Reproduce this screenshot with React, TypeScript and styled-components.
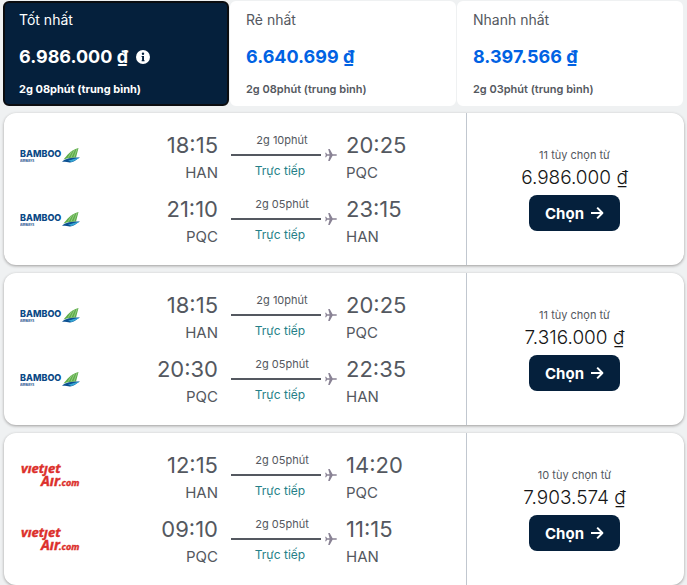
import React from "react";
import styled, { createGlobalStyle } from "styled-components";

const GlobalStyle = createGlobalStyle`
  *, *::before, *::after { box-sizing: border-box; }
  body {
    margin: 0;
    background: #eff1f2;
    color: #545860;
    font-family: Inter, "Liberation Sans", sans-serif;
  }
  button { font-family: inherit; }
`;

const Page = styled.main`
  padding: 1px 3px 0;
`;

const Tabs = styled.div`
  display: grid;
  grid-template-columns: repeat(3, minmax(0, 1fr));
  gap: 1px;
  margin: 0 1px 7px 0;
`;

const Tab = styled.button<{ $active: boolean }>`
  display: flex;
  flex-direction: column;
  align-items: flex-start;
  padding: 7px 14px;
  border: 2px solid ${(p) => (p.$active ? "#0b0d10" : "#fff")};
  border-radius: 6px;
  background: ${(p) => (p.$active ? "#05203c" : "#fff")};
  color: ${(p) => (p.$active ? "#fff" : "#545860")};
  text-align: left;
  cursor: pointer;
`;

const TabLabel = styled.span`
  font-size: 14px;
  line-height: 20px;
`;

const TabPrice = styled.span<{ $active: boolean }>`
  display: flex;
  align-items: center;
  gap: 8px;
  margin: 13px 0 10px;
  color: ${(p) => (p.$active ? "#fff" : "#0062e3")};
  font-size: 18px;
  font-weight: 700;
  line-height: 28px;
`;

const TabNote = styled.span<{ $active: boolean }>`
  font-size: 11px;
  font-weight: ${(p) => (p.$active ? 700 : 600)};
  line-height: 16px;
`;

const Results = styled.div`
  display: grid;
  gap: 8px;
  padding-left: 1px;
`;

const Card = styled.article`
  display: grid;
  grid-template-columns: minmax(0, 1fr) 218px;
  border-radius: 12px;
  background: #fff;
  box-shadow: 0 1px 3px rgba(37, 32, 31, 0.4);
`;

const Legs = styled.div`
  padding: 12px 0 12px 16px;
`;

const Leg = styled.div`
  display: grid;
  grid-template-columns: 60px minmax(0, 1fr) 106px 129px;
  align-items: center;
  height: 64px;
`;

const Logo = styled.div`
  display: flex;
  padding-bottom: 4px;
`;

const Stop = styled.div<{ $end?: boolean }>`
  padding: ${(p) => (p.$end ? "0 13px 0 0" : "0 0 0 9px")};
  text-align: ${(p) => (p.$end ? "right" : "left")};
`;

const Time = styled.div`
  font-size: 22px;
  line-height: 32px;
`;

const Airport = styled.div`
  font-size: 15px;
  line-height: 24px;
`;

const Route = styled.div`
  display: grid;
  padding-bottom: 3px;
  line-height: 16px;
`;

const RouteText = styled.span<{ $direct?: boolean }>`
  padding: ${(p) => (p.$direct ? "1px 8px 0 0" : "0 4px 0 0")};
  color: ${(p) => (p.$direct ? "#257f88" : "#545860")};
  font-size: ${(p) => (p.$direct ? "12px" : "11px")};
  text-align: center;
`;

const Track = styled.div`
  display: flex;
  align-items: center;
  gap: 4px;
  height: 14px;
`;

const Line = styled.div`
  flex: 1;
  height: 2px;
  background: #545860;
`;

const Offer = styled.div`
  display: flex;
  flex-direction: column;
  align-items: center;
  justify-content: center;
  padding-right: 2px;
  border-left: 1px solid #c1c7cf;
`;

const Options = styled.span`
  font-size: 11px;
  line-height: 16px;
`;

const Price = styled.span`
  margin: 2px 0 5px;
  color: #161616;
  font-size: 19px;
  font-weight: 300;
  line-height: 25px;
`;

const Choose = styled.button`
  display: flex;
  align-items: center;
  gap: 6px;
  height: 36px;
  padding: 0 16px;
  border: 0;
  border-radius: 8px;
  background: #05203c;
  color: #fff;
  font-size: 15px;
  font-weight: 700;
  cursor: pointer;
`;

const InfoIcon = () => (
  <svg width="14" height="14" viewBox="0 0 14 14" aria-hidden="true">
    <circle cx="7" cy="7" r="7" fill="#fff" />
    <circle cx="7" cy="3.8" r="1.2" fill="#05203c" />
    <path d="M5.6 6H8v4.2h.6v1H5.600v-1h.5V7h-.5z" fill="#05203c" />
  </svg>
);

const ArrowIcon = () => (
  <svg width="14" height="14" viewBox="0 0 14 14" fill="none" stroke="#fff" strokeWidth="2" aria-hidden="true">
    <path d="M1 7h11M7.2 1.6 12.4 7l-5.2 5.4" strokeLinejoin="round" />
  </svg>
);

const PlaneIcon = () => (
  <svg width="12" height="12" viewBox="0 0 12 12" fill="#898294" aria-hidden="true">
    <path d="M12 6c0 .5-.6.8-1.3.8H7.6L4.7 12H3.2l1.4-5.2H2.1L1.1 8.3H.1L.8 6 .1 3.7h1l1 1.5h2.5L3.2 0h1.5l2.9 5.2h3.1c.7 0 1.3.3 1.3.8z" />
  </svg>
);

const BambooLogo = () => (
  <svg width="60" height="15" viewBox="0 0 60 15" role="img" aria-label="Bamboo Airways">
    <text x="0" y="9" fontFamily="Inter, sans-serif" fontSize="8" fontWeight="800" fill="#0b4a86">
      <tspan fontSize="9">BAMBOO</tspan>
    </text>
    <text x="0" y="14" fontFamily="Inter, sans-serif" fontSize="3" fontWeight="700" fill="#0b4a86">
      AIRWAYS
    </text>
    <path d="M43.500 11.500C47 8 50 2 58.500 0L56 9.500c-4 .2-8 .6-12.500 2z" fill="#5eae4a" />
    <path d="M48 9.800 52 3M51 9.500 54.500 1.800M54 9.200 57 1" stroke="#b9dda6" strokeWidth=".6" />
    <path d="M42 13.800c4-3.600 10-4.300 18-4.200-3 1.400-6 4.700-10 4.900-2 .1-4-.8-8-.7z" fill="#0b4f91" />
    <path d="M48 12.500c4-.4 7-2.200 12-2.900-3 1.400-5 3.600-8.500 4.500z" fill="#35a6d5" />
  </svg>
);

const VietjetMark = styled.svg`
  overflow: visible;
  font-family: "Open Sans", sans-serif;
  font-weight: 700;
  font-style: italic;
`;

const VietjetLogo = () => (
  <VietjetMark width="60" height="32" viewBox="0 0 60 32" fill="#dc2f2b" stroke="#dc2f2b" strokeWidth=".4" role="img" aria-label="Vietjet Air.com">
    <text x="1" y="14" fontSize="13">
      vıetȷet
    </text>
    <text x="21" y="27" fontSize="14">
      Aır
    </text>
    <text x="39" y="27" fontSize="9">
      .com
    </text>
  </VietjetMark>
);

type Airline = "bamboo" | "vietjet";
type Flight = { from: string; to: string; depart: string; arrive: string; duration: string };

const tabs = [
  { label: "Tốt nhất", price: "6.986.000 ₫", note: "2g 08phút (trung bình)" },
  { label: "Rẻ nhất", price: "6.640.699 ₫", note: "2g 08phút (trung bình)" },
  { label: "Nhanh nhất", price: "8.397.566 ₫", note: "2g 03phút (trung bình)" },
];

const results: { airline: Airline; options: number; price: string; flights: Flight[] }[] = [
  {
    airline: "bamboo",
    options: 11,
    price: "6.986.000 ₫",
    flights: [
      { from: "HAN", to: "PQC", depart: "18:15", arrive: "20:25", duration: "2g 10phút" },
      { from: "PQC", to: "HAN", depart: "21:10", arrive: "23:15", duration: "2g 05phút" },
    ],
  },
  {
    airline: "bamboo",
    options: 11,
    price: "7.316.000 ₫",
    flights: [
      { from: "HAN", to: "PQC", depart: "18:15", arrive: "20:25", duration: "2g 10phút" },
      { from: "PQC", to: "HAN", depart: "20:30", arrive: "22:35", duration: "2g 05phút" },
    ],
  },
  {
    airline: "vietjet",
    options: 10,
    price: "7.903.574 ₫",
    flights: [
      { from: "HAN", to: "PQC", depart: "12:15", arrive: "14:20", duration: "2g 05phút" },
      { from: "PQC", to: "HAN", depart: "09:10", arrive: "11:15", duration: "2g 05phút" },
    ],
  },
];

const FlightLeg = ({ airline, flight }: { airline: Airline; flight: Flight }) => (
  <Leg>
    <Logo>{airline === "bamboo" ? <BambooLogo /> : <VietjetLogo />}</Logo>
    <Stop $end>
      <Time>{flight.depart}</Time>
      <Airport>{flight.from}</Airport>
    </Stop>
    <Route>
      <RouteText>{flight.duration}</RouteText>
      <Track>
        <Line />
        <PlaneIcon />
      </Track>
      <RouteText $direct>Trực tiếp</RouteText>
    </Route>
    <Stop>
      <Time>{flight.arrive}</Time>
      <Airport>{flight.to}</Airport>
    </Stop>
  </Leg>
);

export default function App() {
  const [selected, setSelected] = React.useState(0);
  return (
    <Page>
      <GlobalStyle />
      <Tabs>
        {tabs.map((tab, i) => {
          const active = i === selected;
          return (
            <Tab key={tab.label} $active={active} aria-pressed={active} onClick={() => setSelected(i)}>
              <TabLabel>{tab.label}</TabLabel>
              <TabPrice $active={active}>
                {tab.price}
                {active && <InfoIcon />}
              </TabPrice>
              <TabNote $active={active}>{tab.note}</TabNote>
            </Tab>
          );
        })}
      </Tabs>
      <Results>
        {results.map((result) => (
          <Card key={result.price}>
            <Legs>
              {result.flights.map((flight) => (
                <FlightLeg key={flight.depart} airline={result.airline} flight={flight} />
              ))}
            </Legs>
            <Offer>
              <Options>{result.options} tùy chọn từ</Options>
              <Price>{result.price}</Price>
              <Choose>
                Chọn <ArrowIcon />
              </Choose>
            </Offer>
          </Card>
        ))}
      </Results>
    </Page>
  );
}
